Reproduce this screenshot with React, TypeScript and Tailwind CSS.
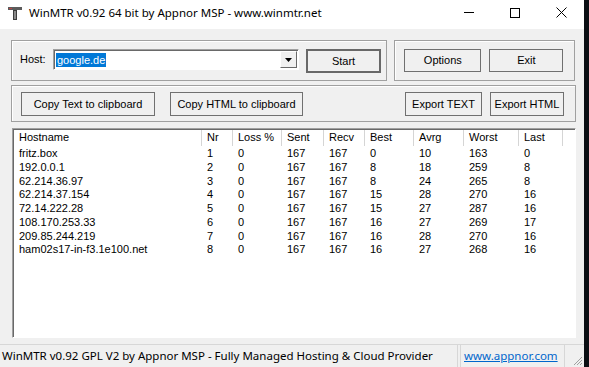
const ROWS: string[][] = [
  ['fritz.box', '1', '0', '167', '167', '0', '10', '163', '0'],
  ['192.0.0.1', '2', '0', '167', '167', '8', '18', '259', '8'],
  ['62.214.36.97', '3', '0', '167', '167', '8', '24', '265', '8'],
  ['62.214.37.154', '4', '0', '167', '167', '15', '28', '270', '16'],
  ['72.14.222.28', '5', '0', '167', '167', '15', '27', '287', '16'],
  ['108.170.253.33', '6', '0', '167', '167', '16', '27', '269', '17'],
  ['209.85.244.219', '7', '0', '167', '167', '16', '28', '270', '16'],
  ['ham02s17-in-f3.1e100.net', '8', '0', '167', '167', '16', '27', '268', '16'],
]

const COLUMNS = [
  { label: 'Hostname', w: 'w-[188px]' },
  { label: 'Nr', w: 'w-[31px]' },
  { label: 'Loss %', w: 'w-[49px]' },
  { label: 'Sent', w: 'w-[42px]' },
  { label: 'Recv', w: 'w-[41px]' },
  { label: 'Best', w: 'w-[49px]' },
  { label: 'Avrg', w: 'w-[50px]' },
  { label: 'Worst', w: 'w-[55px]' },
  { label: 'Last', w: 'w-[44px]' },
]

const dlgFont = "font-['Liberation_Sans',Arial,sans-serif] text-[11px]"
const uiFont = "font-['Noto_Sans','Open_Sans',sans-serif] text-[11.5px]"

function Btn({ label, className, primary }: { label: string; className: string; primary?: boolean }) {
  return (
    <div
      className={`flex items-center justify-center bg-[#f0f0f0] text-black ${
        primary ? 'border-2 border-[#686868]' : 'border border-[#707070]'
      } ${className}`}
    >
      {label}
    </div>
  )
}

function AppIcon() {
  return (
    <svg width="14" height="13" viewBox="0 0 14 13">
      <rect x="0" y="0" width="14" height="3" fill="#5b5b5b" />
      <rect x="1" y="1" width="3" height="1" fill="#b44" />
      <rect x="5" y="3" width="4" height="10" fill="#3d3d3d" />
      <rect x="6" y="4" width="2" height="8" fill="#8a8a8a" />
    </svg>
  )
}

export default function App() {
  return (
    <div className="flex w-[589px] h-[367px] bg-[#0b0f14] overflow-hidden">
      <div className={`flex flex-col w-[584px] h-full bg-[#f0f0f0] ${dlgFont}`}>
        {/* title bar */}
        <div className="flex items-center h-[29px] bg-white shrink-0">
          <div className="ml-[8px] mt-[-2px]">
            <AppIcon />
          </div>
          <span className={`ml-[7px] mt-[-4px] text-black ${uiFont}`}>
            WinMTR v0.92 64 bit by Appnor MSP - www.winmtr.net
          </span>
          <div className="ml-auto flex h-full">
            <div className="w-[46px] flex items-center justify-center mt-[-4px]">
              <div className="w-[10px] h-px bg-black" />
            </div>
            <div className="w-[46px] flex items-center justify-center mt-[-4px]">
              <div className="w-[10px] h-[10px] border border-black" />
            </div>
            <div className="w-[46px] flex items-center justify-center mt-[-4px]">
              <svg width="11" height="11" viewBox="0 0 11 11">
                <path d="M0.5 0.5 L10.5 10.5 M10.5 0.5 L0.5 10.5" stroke="#000" strokeWidth="1" />
              </svg>
            </div>
          </div>
        </div>

        <div className="flex flex-col flex-1 pt-[11px] pl-[11px] pr-[9px]">
          {/* row 1 */}
          <div className="flex gap-[7px]">
            <div className="flex items-center w-[377px] h-[41px] border border-[#a0a0a0] shadow-[inset_1px_1px_0_#fff]">
              <span className="ml-[8px] w-[33px] mt-[-2px]">Host:</span>
              <div className="flex items-center w-[246px] h-[21px] bg-white border border-[#a0a0a0] border-r-white border-b-white shadow-[inset_1px_1px_0_#696969] mt-[-2px]">
                <span className="ml-[2px] px-[1px] bg-[#0078d7] text-white leading-[14px]">google.de</span>
                <div className="ml-auto mr-px flex items-center justify-center w-[17px] h-[17px] bg-[#f0f0f0] border border-white border-r-[#696969] border-b-[#696969]">
                  <svg width="7" height="4" viewBox="0 0 7 4">
                    <path d="M0 0 H7 L3.5 4 Z" fill="#000" />
                  </svg>
                </div>
              </div>
              <Btn label="Start" primary className="ml-[7px] w-[75px] h-[24px] mt-[1px]" />
            </div>
            <div className="flex items-center w-[181px] h-[41px] border border-[#a0a0a0] shadow-[inset_1px_1px_0_#fff]">
              <Btn label="Options" className="ml-[9px] w-[77px] h-[23px]" />
              <Btn label="Exit" className="ml-[8px] w-[74px] h-[23px]" />
            </div>
          </div>

          {/* row 2 */}
          <div className="flex items-center mt-[4px] w-[565px] h-[37px] border border-[#a0a0a0] shadow-[inset_1px_1px_0_#fff]">
            <Btn label="Copy Text to clipboard" className="ml-[9px] w-[134px] h-[24px] mt-[1px]" />
            <Btn label="Copy HTML to clipboard" className="ml-[15px] w-[133px] h-[24px] mt-[1px]" />
            <Btn label="Export TEXT" className="ml-auto w-[77px] h-[24px] mt-[1px]" />
            <Btn label="Export HTML" className="ml-[8px] mr-[11px] w-[74px] h-[24px] mt-[1px]" />
          </div>

          {/* list view */}
          <div className="mt-[6px] ml-px w-[564px] h-[210px] bg-white border border-[#a0a0a0] border-r-white border-b-white shadow-[inset_1px_1px_0_#696969] overflow-hidden">
            <div className="flex h-[16px] mt-px ml-px">
              {COLUMNS.map((c) => (
                <div key={c.label} className={`${c.w} shrink-0 pl-[5px] leading-[15px] border-r border-[#d5d5d5]`}>
                  {c.label}
                </div>
              ))}
            </div>
            <div className="mt-[1px] ml-px">
              {ROWS.map((r) => (
                <div key={r[0]} className="flex h-[13.75px] leading-[13px]">
                  {r.map((v, i) => (
                    <div key={i} className={`${COLUMNS[i].w} shrink-0 pl-[5px] whitespace-nowrap`}>
                      {v}
                    </div>
                  ))}
                </div>
              ))}
            </div>
          </div>
        </div>

        {/* status bar */}
        <div className={`flex items-stretch h-[23px] border-t border-[#d7d7d7] shrink-0 ${uiFont}`}>
          <div className="w-[458px] pl-[2px] border-r border-[#d7d7d7] leading-[21px] whitespace-nowrap text-black">
            WinMTR v0.92 GPL V2 by Appnor MSP - Fully Managed Hosting &amp; Cloud Provider
          </div>
          <div className="ml-[2px] w-[105px] pl-[3px] border-l border-r border-[#d7d7d7] leading-[21px]">
            <span className="text-[#0066cc] underline">www.appnor.com</span>
          </div>
          <div className="flex-1 flex items-end justify-end pr-[1px] pb-[1px]">
            <svg width="11" height="11" viewBox="0 0 11 11">
              <path d="M10 2 L2 10 M10 5 L5 10 M10 8 L8 10" stroke="#a0a0a0" strokeWidth="1" />
            </svg>
          </div>
        </div>
      </div>
    </div>
  )
}
